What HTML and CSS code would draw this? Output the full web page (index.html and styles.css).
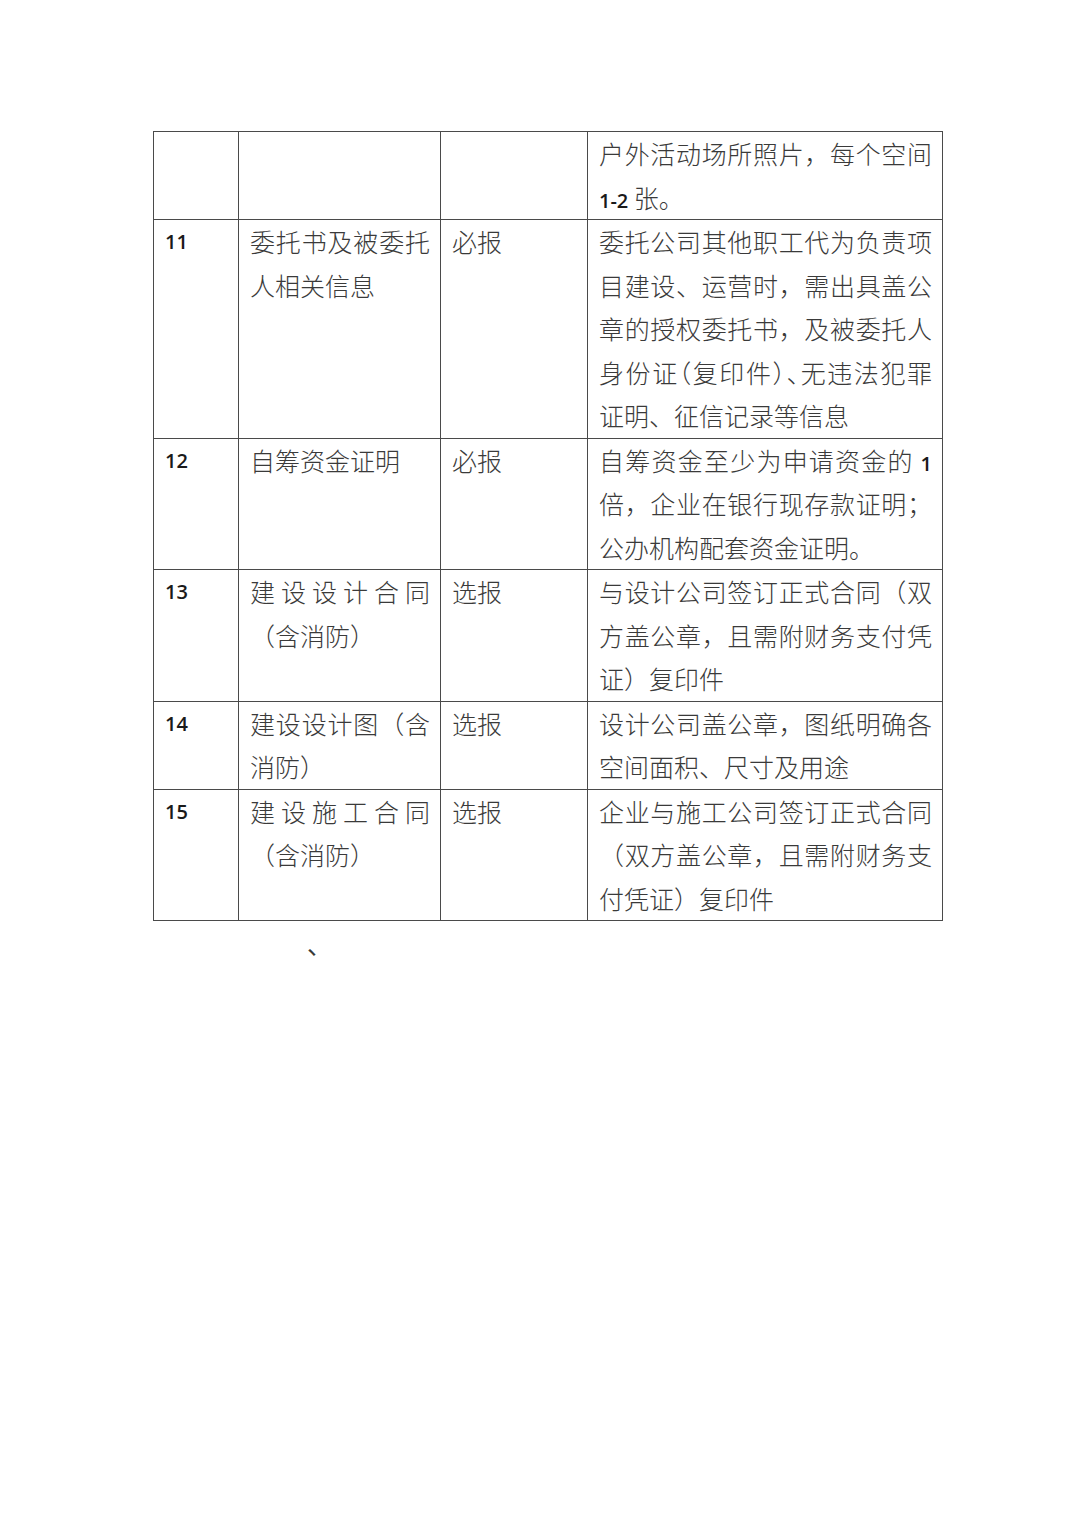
FILE: index.html
```html
<!DOCTYPE html>
<html lang="zh-CN">
<head>
<meta charset="utf-8">
<title>申报材料</title>
<link rel="stylesheet" href="styles.css">
</head>
<body>
<main class="page">
  <table class="materials">
    <colgroup>
      <col class="c-no">
      <col class="c-name">
      <col class="c-type">
      <col class="c-desc">
    </colgroup>
    <tbody>
      <tr>
        <td class="num"></td>
        <td></td>
        <td></td>
        <td>户外活动场所照片，每个空间<span class="lat">1-2</span> 张。</td>
      </tr>
      <tr>
        <td class="num">11</td>
        <td>委托书及被委托人相关信息</td>
        <td>必报</td>
        <td><span class="ln">委托公司其他职工代为负责项目建设、运营时，需出具盖公章的授权委托书，及被委托人</span><span class="ln">身份证<span class="half">（</span>复印件<span class="half">）、</span>无违法犯罪</span>证明、征信记录等信息</td>
      </tr>
      <tr>
        <td class="num">12</td>
        <td>自筹资金证明</td>
        <td>必报</td>
        <td>自筹资金至少为申请资金的 <span class="lat">1</span>倍，企业在银行现存款证明；公办机构配套资金证明。</td>
      </tr>
      <tr>
        <td class="num">13</td>
        <td>建设设计合同（含消防）</td>
        <td>选报</td>
        <td>与设计公司签订正式合同（双方盖公章，且需附财务支付凭证）复印件</td>
      </tr>
      <tr>
        <td class="num">14</td>
        <td>建设设计图（含消防）</td>
        <td>选报</td>
        <td>设计公司盖公章，图纸明确各空间面积、尺寸及用途</td>
      </tr>
      <tr>
        <td class="num">15</td>
        <td>建设施工合同（含消防）</td>
        <td>选报</td>
        <td>企业与施工公司签订正式合同（双方盖公章，且需附财务支付凭证）复印件</td>
      </tr>
    </tbody>
  </table>
  <p class="stray">、</p>
</main>
</body>
</html>
```
FILE: styles.css
```css
html, body {
  margin: 0;
  padding: 0;
  background: #ffffff;
}

.page {
  padding: 131px 0 0 153px;
  font-family: "Noto Sans CJK SC", "Noto Sans", sans-serif;
  color: #3a3a3a;
}

.materials {
  border-collapse: collapse;
  table-layout: fixed;
  width: 789px;
}

.c-no { width: 85px; }
.c-name { width: 202px; }
.c-type { width: 147px; }
.c-desc { width: 355px; }

.materials td {
  border: 1px solid #4a4a4a;
  vertical-align: top;
  padding: 0 10px 0 11px;
  font-size: 25px;
  font-weight: 300;
  line-height: 43.5px;
  text-align: justify;
}

.materials td.num {
  font-family: "Open Sans", "Liberation Sans", sans-serif;
  font-size: 20px;
  font-weight: 600;
  color: #1a1a1a;
}

.ln {
  display: block;
  text-align: justify;
  text-align-last: justify;
}

.lat {
  font-family: "Open Sans", "Liberation Sans", sans-serif;
  font-size: 20px;
  font-weight: 600;
  line-height: 1;
  color: #1a1a1a;
}

.half {
  font-feature-settings: "halt" 1;
}

.stray {
  margin: 10px 0 0 154px;
  font-size: 25px;
  line-height: 25px;
}
```
